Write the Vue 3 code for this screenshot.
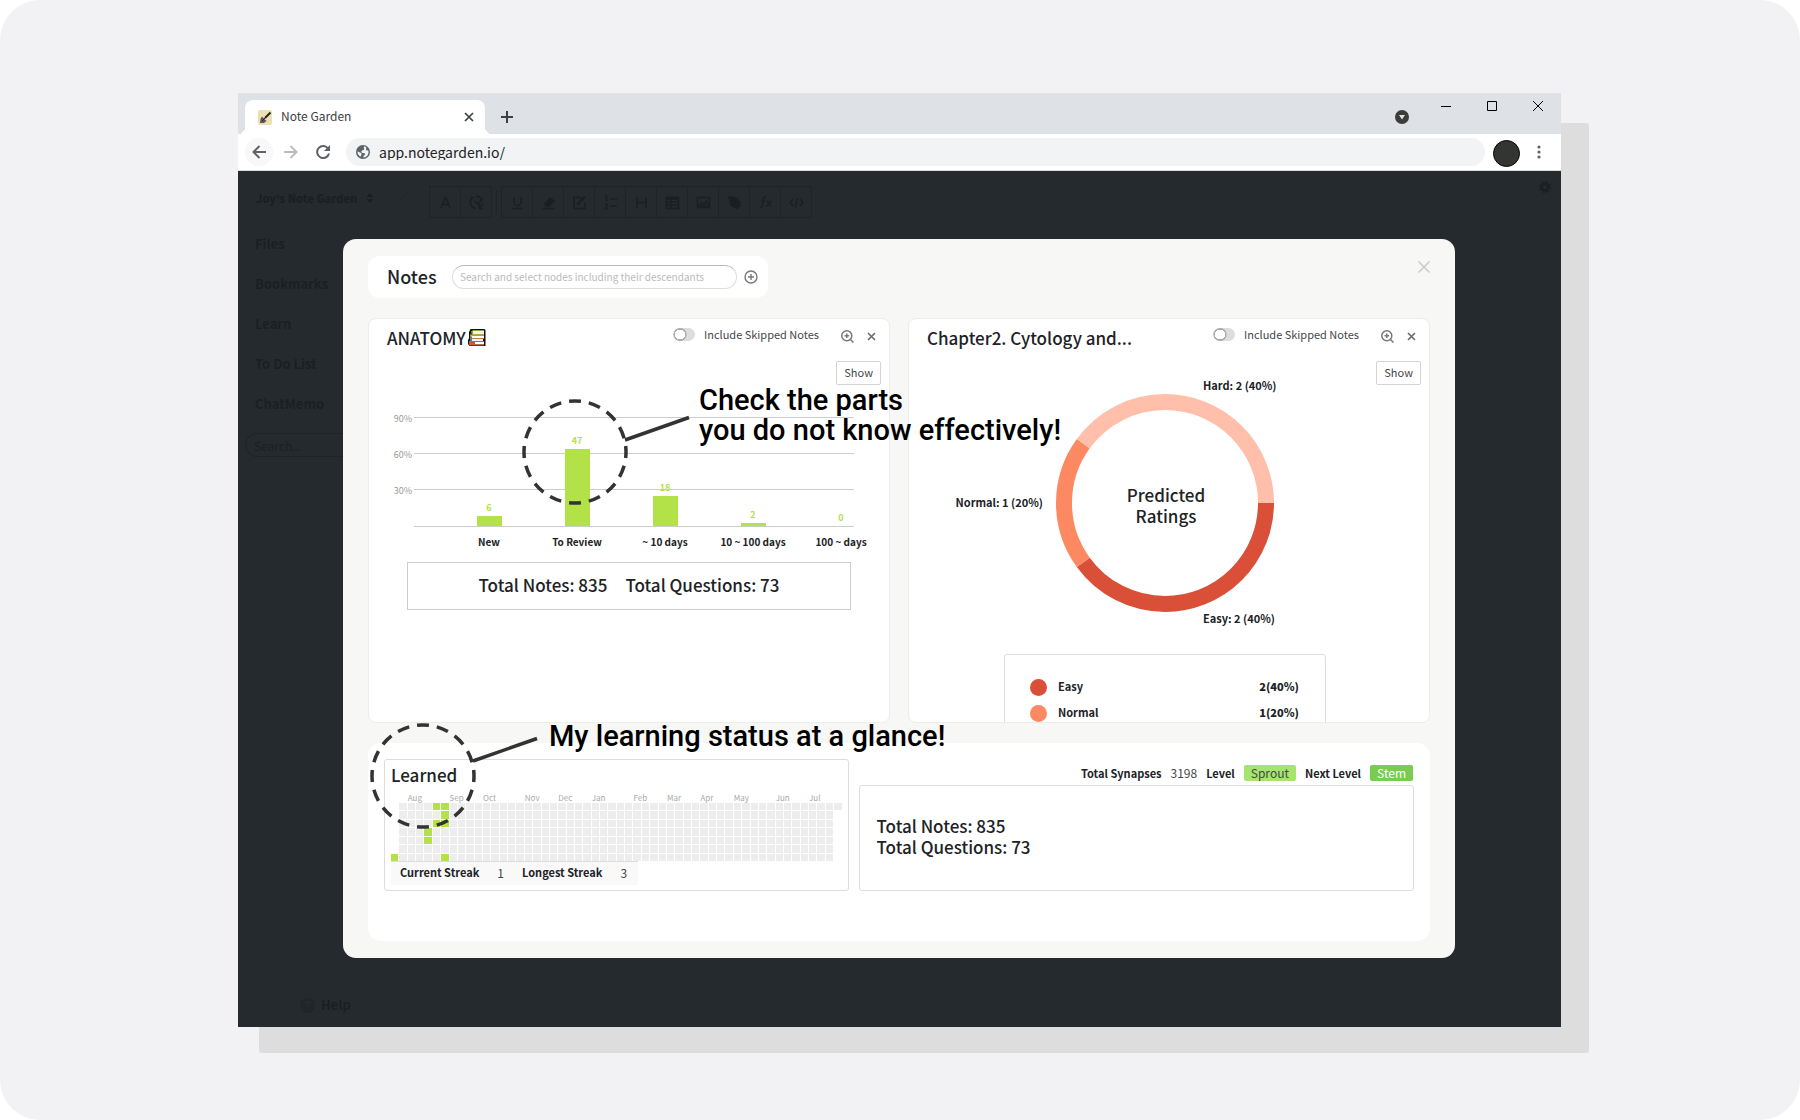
<script setup>
const nav = ['Files', 'Bookmarks', 'Learn', 'To Do List', 'ChatMemo']

const styleTools = [
  { name: 'Font', d: 'M3 13 7 2.500h1L12 13M4.500 9.500h6' },
  { name: 'Review', d: 'M5 2.500H2v3M2.500 3C.5 7 1 12 6.500 13.500M7 1.500c3-.5 5 .5 6 3M5.500 6l3 3L14 3.500M10 9v4.500h4M10.500 13 14 8' },
]
const editTools = [
  { name: 'Underline', d: 'M4 2v5a3.500 3.500 0 0 0 7 0V2M2.500 13.500h10' },
  { name: 'Highlight', d: 'M1.500 13.500h12M4 9l5-6 4 3-5 5H5z', fill: true },
  { name: 'Edit', d: 'M9 2.500H2v11h11V7M6 9.500l7.500-8M5.500 10l.5-2 6-6.500' },
  { name: 'Numbered list', d: 'M2 2l1.500-1v5M2 9.500c2-1.500 3 .5 2 1.500l-2 2.500h3M7 4h7M7 11h7' },
  { name: 'Heading', d: 'M3 2v11M12 2v11M3 7.500h9' },
  { name: 'Table', d: 'M1.500 2.500h12v11h-12zM1.500 4h12M1.500 7h12M1.500 10h12M6 4v9' },
  { name: 'Image', d: 'M1.500 2.500h12v10h-12zM3 11l3-3.500 2 2L10.500 6l2 5z' },
  { name: 'Pen', d: 'M2 2l7 1 4 5-4 5-5-3zM2 2l6 6M10 14l4-4', fill: true },
  { name: 'Formula', d: 'M8 2C5.500 1 5.500 4 5 7.500S4 13 1.500 12.500M3 6h4M8.500 6c2 0 2 5 5 5M13.500 6c-2 0-3 5-5.500 5' },
  { name: 'Code', d: 'M4 4 1 7.500 4 11M11 4l3 3.500L11 11M8.500 3l-2 9' },
]

const ticks = ['90%', '60%', '30%']
const bars = [
  { label: 'New', value: 6, height: 10 },
  { label: 'To Review', value: 47, height: 77 },
  { label: '~ 10 days', value: 18, height: 30 },
  { label: '10 ~ 100 days', value: 2, height: 3 },
  { label: '100 ~ days', value: 0, height: 0 },
]

const ratings = [
  { name: 'Easy', value: '2(40%)', color: '#d94f38' },
  { name: 'Normal', value: '1(20%)', color: '#fc8961' },
]

const months = [
  ['Aug', 3], ['Sep', 8], ['Oct', 12], ['Nov', 17], ['Dec', 21], ['Jan', 25],
  ['Feb', 30], ['Mar', 34], ['Apr', 38], ['May', 42], ['Jun', 47], ['Jul', 51],
]
const studied = new Set(['0-6', '4-3', '4-4', '5-0', '5-2', '6-0', '6-1', '6-2', '6-6'])
const days = []
for (let week = 0; week < 54; week++) {
  for (let day = 0; day < 7; day++) {
    if (week === 0 && day < 6) continue
    if (week === 53 && day > 0) continue
    days.push({ week: week + 1, day: day + 1, on: studied.has(`${week}-${day}`) })
  }
}
</script>

<template>
  <main class="stage">
    <div class="window">
      <header class="tabs">
        <div class="tab">
          <svg width="14" height="15" viewBox="0 0 14 15">
            <rect width="14" height="15" rx="2" fill="#ecdfb0" />
            <path d="M12.500 2.500 7 8" stroke="#222" stroke-width="2" />
            <path d="M4 6.500 8.500 11 6 13H2l.5-4z" fill="#5a5561" />
            <path d="M4 11l3-3" stroke="#222" stroke-width="1" />
          </svg>
          <span class="tab-title">Note Garden</span>
          <button class="plain" aria-label="Close tab">
            <svg width="10" height="10" viewBox="0 0 10 10" stroke="#3c4043" stroke-width="1.700"><path d="M1 1l8 8M9 1 1 9" /></svg>
          </button>
        </div>
        <button class="plain new-tab" aria-label="New tab">
          <svg width="12" height="12" viewBox="0 0 12 12" stroke="#3c4043" stroke-width="2"><path d="M6 0v12M0 6h12" /></svg>
        </button>
        <button class="plain tab-search" aria-label="Search tabs">
          <svg width="14" height="14" viewBox="0 0 14 14"><circle cx="7" cy="7" r="7" fill="#3c3c3c" /><path d="M4 5h6L7 9.500z" fill="#dee1e6" /></svg>
        </button>
        <div class="win-controls">
          <button class="plain" aria-label="Minimize"><svg width="10" height="10" viewBox="0 0 10 10" stroke="#000"><path d="M0 5.500h10" /></svg></button>
          <button class="plain" aria-label="Maximize"><svg width="10" height="10" viewBox="0 0 10 10" stroke="#000" fill="none"><path d="M.5.5h9v9h-9z" /></svg></button>
          <button class="plain" aria-label="Close"><svg width="10" height="10" viewBox="0 0 10 10" stroke="#000"><path d="M0 0l10 10M10 0 0 10" /></svg></button>
        </div>
      </header>

      <div class="address-bar">
        <button class="plain round back" aria-label="Back">
          <svg width="14" height="14" viewBox="0 0 14 14" fill="none" stroke="#5f6368" stroke-width="2"><path d="M14 7H1.500M7.500 1l-6 6 6 6" /></svg>
        </button>
        <button class="plain round" aria-label="Forward">
          <svg width="14" height="14" viewBox="0 0 14 14" fill="none" stroke="#babcbe" stroke-width="2"><path d="M0 7h12.500M6.500 1l6 6-6 6" /></svg>
        </button>
        <button class="plain round" aria-label="Reload">
          <svg width="14" height="14" viewBox="0 0 14 14" fill="none" stroke="#5f6368" stroke-width="2"><path d="M12 3.500A6 6 0 1 0 13 8.500" /><path d="M14 0v6H8z" fill="#5f6368" stroke="none" /></svg>
        </button>
        <label class="omnibox">
          <svg width="14" height="14" viewBox="0 0 14 14"><circle cx="7" cy="7" r="7" fill="#5f6368" /><path d="M8 1.500C7 3 9 3 8 4.500S5 5 5.500 7 9 7 9 9s-2 1-1.500 3.500c3-.2 5-2.500 5-5.500 0-.8-.2-1.500-.5-2-1 1-2 .500-2-1 0-.8.5-1 .5-1.200C9.700 1.900 9 1.600 8 1.500zM1.500 6.500c1.500.2 2 1 3.500 1.500 1 .5.500 2-.5 3.500C2.500 10.500 1.500 9 1.500 6.500z" fill="#f1f3f4" /></svg>
          <input type="text" value="app.notegarden.io/" aria-label="Address" />
        </label>
        <span class="avatar"></span>
        <button class="plain" aria-label="Menu">
          <svg width="14" height="14" viewBox="0 0 14 14" fill="#5f6368"><circle cx="7" cy="2" r="1.600" /><circle cx="7" cy="7" r="1.600" /><circle cx="7" cy="12" r="1.600" /></svg>
        </button>
      </div>

      <div class="app">
        <div class="workspace">
          <div class="top-row">
            <div class="garden">
              <strong>Joy's Note Garden</strong>
              <svg width="8" height="10" viewBox="0 0 8 10" fill="currentColor"><path d="M4 0l3.500 4h-7zM4 10 .5 6h7z" /></svg>
            </div>
            <svg class="collapse" width="8" height="14" viewBox="0 0 8 14" fill="none" stroke="currentColor"><path d="M7 1 1 7l6 6" /></svg>
            <div class="tools">
              <button v-for="t in styleTools" :key="t.name" :aria-label="t.name">
                <svg width="15" height="15" viewBox="0 0 15 15" fill="none" stroke="currentColor" stroke-width="1.500"><path :d="t.d" /></svg>
              </button>
            </div>
            <span class="divider"></span>
            <div class="tools">
              <button v-for="t in editTools" :key="t.name" :aria-label="t.name">
                <svg width="15" height="15" viewBox="0 0 15 15" :fill="t.fill ? 'currentColor' : 'none'" stroke="currentColor" stroke-width="1.500"><path :d="t.d" /></svg>
              </button>
            </div>
            <button class="plain gear" aria-label="Settings">
              <svg width="12" height="12" viewBox="0 0 12 12" fill="none" stroke="currentColor"><circle cx="6" cy="6" r="3.200" stroke-width="2.500" /><circle cx="6" cy="6" r="5.200" stroke-width="1.600" stroke-dasharray="2.040 2.040" /></svg>
            </button>
          </div>
          <nav class="side">
            <a v-for="n in nav" :key="n" href="#">{{ n }}</a>
            <input type="search" placeholder="Search..." aria-label="Search" />
          </nav>
          <a class="help" href="#">
            <svg width="15" height="15" viewBox="0 0 15 15"><circle cx="7.500" cy="7.500" r="7.500" fill="#202528" /><path d="M5.500 6c0-3 4-3 4-.5 0 1.500-2 1.500-2 3.500M7.500 10.500V12" fill="none" stroke="#272c30" stroke-width="1.500" /></svg>
            Help
          </a>
        </div>

        <section class="modal">
          <div class="modal-top">
            <div class="notes">
              <label for="node-search">Notes</label>
              <input id="node-search" type="text" placeholder="Search and select nodes including their descendants" />
              <button class="plain" aria-label="Add">
                <svg width="14" height="14" viewBox="0 0 14 14" fill="none" stroke="#77777b" stroke-width="1.400"><circle cx="7" cy="7" r="6" /><path d="M7 4v6M4 7h6" /></svg>
              </button>
            </div>
            <button class="plain modal-close" aria-label="Close">
              <svg width="12" height="12" viewBox="0 0 12 12" stroke="#ccc" stroke-width="1.700" stroke-linecap="round"><path d="M1 1l10 10M11 1 1 11" /></svg>
            </button>
          </div>

          <div class="cards">
            <article class="card">
              <header class="card-head">
                <h2>
                  ANATOMY
                  <svg width="18" height="18" viewBox="0 0 18 18">
                    <path d="M2.500 0H16a1.500 1.500 0 0 1 1.500 1.500V17H1.500L0 15v-4l1-1.500V3z" fill="#111" />
                    <path d="M4 2h12v3H4z" fill="#f4f1e4" /><path d="M3 2.500 5 1h11v1H5v3h11v1H4z" fill="#7da853" />
                    <path d="M3 6.500h13v2.500H3z" fill="#fff" /><path d="M2 5.500h14v1H4V9h12v.8H2.500z" fill="#e0a647" />
                    <path d="M3 10h12v2H3z" fill="#eef3fa" /><path d="M2 8h2v4H2z" fill="#3f80c8" />
                    <path d="M6 13h10v2.500H6z" fill="#fff" /><path d="M1 12h15v1H7v2.500h9v1H2l-1-1z" fill="#d9562c" />
                  </svg>
                </h2>
                <label class="switch"><input type="checkbox" /><span>Include Skipped Notes</span></label>
                <button class="plain zoom" aria-label="Zoom in">
                  <svg width="13" height="13" viewBox="0 0 13 13" fill="none" stroke="#77777b" stroke-width="1.500"><circle cx="5.800" cy="5.800" r="5" /><path d="M9.500 9.500l3 3M5.800 3.500v4.600M3.500 5.800h4.600" /></svg>
                </button>
                <button class="plain remove" aria-label="Remove">
                  <svg width="9" height="9" viewBox="0 0 9 9" stroke="#6a6a6e" stroke-width="1.600"><path d="M1 1l7 7M8 1 1 8" /></svg>
                </button>
              </header>
              <div class="card-body">
                <button class="show">Show</button>
                <div class="chart">
                  <div class="axis"><span v-for="t in ticks" :key="t">{{ t }}</span></div>
                  <div class="chart-main">
                    <div class="plot">
                      <div v-for="b in bars" :key="b.label" class="bar-col">
                        <span>{{ b.value }}</span>
                        <div class="bar" :style="{ height: b.height + 'px' }"></div>
                      </div>
                    </div>
                    <div class="cats"><span v-for="b in bars" :key="b.label">{{ b.label }}</span></div>
                  </div>
                </div>
                <div class="totals"><span>Total Notes: 835</span><span>Total Questions: 73</span></div>
              </div>
              <div class="callout callout-chart">
                <svg width="170" height="107" viewBox="0 0 170 107" fill="none" stroke="#333" stroke-width="3.500">
                  <circle cx="53" cy="53" r="51" pathLength="320" stroke-dasharray="12 8" stroke-dashoffset="6" />
                  <path d="M103 41 167 18.500" />
                </svg>
                <p>Check the parts<br />you do not know effectively!</p>
              </div>
            </article>

            <article class="card clipped">
              <header class="card-head">
                <h2>Chapter2. Cytology and...</h2>
                <label class="switch"><input type="checkbox" /><span>Include Skipped Notes</span></label>
                <button class="plain zoom" aria-label="Zoom in">
                  <svg width="13" height="13" viewBox="0 0 13 13" fill="none" stroke="#77777b" stroke-width="1.500"><circle cx="5.800" cy="5.800" r="5" /><path d="M9.500 9.500l3 3M5.800 3.500v4.600M3.500 5.800h4.600" /></svg>
                </button>
                <button class="plain remove" aria-label="Remove">
                  <svg width="9" height="9" viewBox="0 0 9 9" stroke="#6a6a6e" stroke-width="1.600"><path d="M1 1l7 7M8 1 1 8" /></svg>
                </button>
              </header>
              <div class="card-body">
                <button class="show">Show</button>
                <svg class="donut" width="420" height="242" viewBox="0 0 420 242">
                  <g fill="none" stroke-width="16">
                    <circle cx="210" cy="118" r="101" pathLength="100" stroke="#d94f38" stroke-dasharray="40 60" />
                    <circle cx="210" cy="118" r="101" pathLength="100" stroke="#fc8961" stroke-dasharray="20 80" stroke-dashoffset="-40" />
                    <circle cx="210" cy="118" r="101" pathLength="100" stroke="#ffbfab" stroke-dasharray="40 60" stroke-dashoffset="-60" />
                  </g>
                  <text x="248" y="5">Hard: 2 (40%)</text>
                  <text x="88" y="122" text-anchor="end">Normal: 1 (20%)</text>
                  <text x="248" y="238">Easy: 2 (40%)</text>
                  <text class="big" x="211" y="117" text-anchor="middle">Predicted</text>
                  <text class="big" x="211" y="138" text-anchor="middle">Ratings</text>
                </svg>
                <ul class="legend">
                  <li v-for="r in ratings" :key="r.name">
                    <i :style="{ background: r.color }"></i><span>{{ r.name }}</span><b>{{ r.value }}</b>
                  </li>
                </ul>
              </div>
            </article>
          </div>

          <div class="status">
            <article class="learned">
              <h2>Learned</h2>
              <div class="weeks months">
                <span v-for="[m, c] in months" :key="m" :style="{ gridColumn: c }">{{ m }}</span>
              </div>
              <div class="weeks heat">
                <i v-for="d in days" :key="d.week + '-' + d.day" :class="{ on: d.on }" :style="{ gridColumn: d.week, gridRow: d.day }"></i>
              </div>
              <dl class="streaks">
                <dt>Current Streak</dt><dd>1</dd>
                <dt>Longest Streak</dt><dd>3</dd>
              </dl>
              <div class="callout callout-learned">
                <svg width="170" height="107" viewBox="0 0 170 107" fill="none" stroke="#333" stroke-width="3.500">
                  <circle cx="53" cy="53" r="51" pathLength="320" stroke-dasharray="12 8" stroke-dashoffset="6" />
                  <path d="M103 38 167 15.500" />
                </svg>
                <p>My learning status at a glance!</p>
              </div>
            </article>
            <div class="summary">
              <div class="levels">
                <strong>Total Synapses</strong><span>3198</span>
                <strong>Level</strong><span class="tag">Sprout</span>
                <strong>Next Level</strong><span class="tag next">Stem</span>
              </div>
              <div class="summary-box">
                <p>Total Notes: 835</p>
                <p>Total Questions: 73</p>
              </div>
            </div>
          </div>
        </section>
      </div>
    </div>
  </main>
</template>

<style>
body { background: #fff; }
</style>

<style scoped>
* { box-sizing: border-box; margin: 0; }
svg { display: block; flex: none; }
button, input { font: inherit; }
a { color: inherit; text-decoration: none; }

.stage {
  min-height: 100vh;
  padding: 93px 239px 93px 238px;
  border-radius: 40px;
  background: #f2f2f4;
  color: #202226;
  font: 11px/16px "Noto Sans CJK KR", "Noto Sans", sans-serif;
}
.plain { display: flex; align-items: center; justify-content: center; padding: 0; border: 0; background: none; }

.window { position: relative; isolation: isolate; }
.window::before {
  content: "";
  position: absolute;
  z-index: -1;
  inset: 30px -28px -26px 21px;
  border-radius: 3px;
  background: #ddd;
}

.tabs { display: flex; height: 41px; padding: 7px 18px 0 7px; background: #dee1e6; }
.tab {
  position: relative;
  display: flex;
  align-items: center;
  width: 240px;
  padding: 0 11px 0 13px;
  border-radius: 8px 8px 0 0;
  background: #fff;
}
.tab::before, .tab::after { content: ""; position: absolute; bottom: 0; width: 7px; height: 7px; }
.tab::before { left: -7px; background: radial-gradient(circle at 0 0, transparent 7px, #fff 7px); }
.tab::after { right: -7px; background: radial-gradient(circle at 100% 0, transparent 7px, #fff 7px); }
.tab-title { flex: 1; margin-left: 9px; padding-bottom: 2px; font-size: 12px; color: #3c4043; }
.new-tab { margin-left: 16px; }
.tab-search { margin-left: auto; }
.win-controls { display: flex; align-items: flex-start; gap: 36px; margin: 1px 0 0 32px; }

.address-bar { display: flex; align-items: center; height: 37px; padding: 0 15px 0 7px; border-bottom: 1px solid #dadce0; background: #fff; }
.round { width: 28px; height: 28px; margin-right: 4px; border-radius: 14px; }
.back { background: #f8f8f9; }
.omnibox { display: flex; flex: 1; align-items: center; height: 28px; margin: 0 8px 0 5px; padding: 0 10px; border-radius: 14px; background: #f1f3f4; }
.omnibox input { flex: 1; margin-left: 9px; padding: 0; border: 0; background: none; color: #202124; font-size: 14px; outline: 0; }
.avatar { width: 27px; height: 27px; margin: 2px 12px 0 0; border: 1px solid #000; border-radius: 14px; background: #333532; }

.app { display: grid; background: #252a2e; color: #1b1f22; }
.app > * { grid-area: 1 / 1; min-width: 0; }
.workspace { display: flex; flex-direction: column; font-size: 13px; font-weight: 700; }
.top-row { display: flex; height: 53px; padding: 15px 10px 6px 18px; }
.garden { display: flex; align-items: center; gap: 9px; width: 142px; height: 24px; font-size: 11px; }
.collapse { margin: 8px 23px 0 0; color: #202528; }
.tools { display: flex; height: 32px; border: 1px solid #1e2326; border-width: 1px 0 1px 1px; color: #1b1f22; }
.tools button { display: flex; align-items: center; justify-content: center; width: 31px; padding: 0; border: 0; border-right: 1px solid #1e2326; background: none; color: inherit; }
.divider { width: 1px; height: 24px; margin: 4px; background: #1e2326; }
.gear { align-self: flex-start; margin: -5px 0 0 auto; color: #1b1f22; }
.side { display: flex; flex-direction: column; padding-left: 7px; }
.side a { padding-left: 10px; line-height: 40px; }
.side input { width: 180px; height: 24px; margin-top: 9px; padding: 0 8px; border: 1px solid #1e2326; border-radius: 12px; background: none; font-size: 12px; font-weight: 400; }
.side input::placeholder { color: #1b1f22; }
.help { display: flex; align-items: center; gap: 6px; margin-top: auto; padding: 0 0 12px 62px; line-height: 20px; }

.modal { margin: 68px 106px 69px 105px; padding: 17px 25px; border-radius: 13px; background: #f7f7f5; color: #202226; }
.modal-top { display: flex; justify-content: space-between; align-items: flex-start; }
.notes { display: flex; align-items: center; width: 400px; height: 42px; padding: 0 10px 0 19px; border-radius: 12px; background: #fff; }
.notes label { flex: 1; padding-bottom: 2px; font-size: 18px; line-height: 22px; font-weight: 500; }
.notes input { width: 285px; height: 24px; margin-right: 7px; padding: 0 7px 2px; border: 1px solid #ddd; border-top-color: #b8b8b8; border-radius: 12px; font-size: 10px; }
.notes input::placeholder { color: #bbb; }
.modal-close { margin-top: 5px; }

h2 { display: flex; align-items: center; gap: 2px; padding-bottom: 2px; font-size: 17px; line-height: 22px; font-weight: 500; }
.cards { display: grid; grid-template-columns: 1fr 1fr; gap: 18px; height: 405px; margin-top: 20px; }
.card { position: relative; min-width: 0; border: 1px solid #ececec; border-radius: 8px; background: #fff; }
.clipped { overflow: hidden; }
.card-head { display: flex; align-items: flex-start; padding: 8px 13px 0 18px; }
.card-head h2 { flex: 1; }
.switch { display: flex; align-items: center; gap: 9px; margin-top: -1px; color: #44464b; }
.switch input { appearance: none; width: 22px; height: 13px; border-radius: 7px; background: radial-gradient(circle at 7px 50%, #fff 5px, #aaa 5px, #aaa 6px, transparent 7px) #ddd; }
.zoom { margin: 3px 13px 0 22px; }
.remove { margin-top: 5px; }
.card-body { padding: 0 8px 0 0; }
.show { display: block; height: 24px; margin: 10px 0 0 auto; padding: 0 7px 2px; border: 1px solid #d4d4d4; border-radius: 2px; background: #fff; color: #44464b; }

.chart { display: flex; margin: 32px -4px 0 0; }
.axis { display: flex; flex-direction: column; width: 45px; margin-top: -16px; padding-right: 2px; text-align: right; font-size: 9px; line-height: 36px; color: #999; }
.chart-main { flex: 1; min-width: 0; }
.plot {
  height: 110px;
  padding-bottom: 1px;
  background:
    linear-gradient(#ccc, #ccc) 0 100% / calc(100% - 31px) 1px no-repeat,
    repeating-linear-gradient(to bottom, #ccc 0 1px, transparent 1px 36px) 0 0 / calc(100% - 31px) 108px no-repeat;
}
.plot, .cats { display: grid; grid-template-columns: repeat(5, minmax(0, 1fr)); padding-left: 31px; }
.bar-col { display: flex; flex-direction: column; align-items: center; justify-content: flex-end; color: #b2e248; font-size: 9px; font-weight: 700; }
.bar { width: 25px; background: #b2e248; }
.cats { margin-top: 7px; text-align: center; font-size: 10px; font-weight: 700; white-space: nowrap; }
.totals { display: flex; align-items: center; justify-content: center; gap: 18px; height: 48px; margin: 12px 30px 0 38px; padding-bottom: 3px; border: 1px solid #ccc; font-size: 17px; font-weight: 500; }

.donut { margin: 0 auto; overflow: visible; font-weight: 700; fill: #202226; }
.donut .big { font-size: 17px; font-weight: 500; }
.legend { width: 322px; min-height: 118px; margin: 27px auto 0; padding: 18px 26px; border: 1px solid #ddd; border-radius: 3px; list-style: none; font-weight: 700; }
.legend li { display: flex; align-items: center; height: 26px; }
.legend i { width: 17px; height: 17px; margin: 3px 11px 0 -1px; border-radius: 50%; }
.legend b { margin-left: auto; }

.status { display: grid; grid-template-columns: 465fr 556fr; gap: 10px; margin-top: 20px; padding: 16px 16px 50px; border-radius: 13px; background: #fff; }
.status > * { min-width: 0; }
.learned { position: relative; padding: 4px 6px 5px; border: 1px solid #ddd; border-radius: 3px; }
.weeks { display: grid; grid-template-columns: repeat(54, minmax(0, 1fr)); column-gap: 1px; }
.months { margin-top: 4px; font-size: 8px; line-height: 11px; color: #aaa; white-space: nowrap; }
.heat { grid-template-rows: repeat(7, 1fr); row-gap: 1px; height: 58px; }
.heat i { background: #ededed; }
.heat .on { background: #b2e248; }
.streaks { display: flex; width: 247px; height: 24px; padding-left: 9px; border-top: 1px solid #ddd; background: #f9f9f9; line-height: 21px; white-space: nowrap; }
.streaks dt { font-weight: 700; }
.streaks dd { margin: 0 18px; font-size: 12px; color: #44464b; }

.levels { display: flex; justify-content: flex-end; align-items: center; gap: 9px; padding: 6px 1px 4px; }
.levels strong { font-weight: 700; }
.levels span { font-size: 12px; color: #44464b; }
.levels .tag { padding: 0 7px; border-radius: 2px; background: #a5e46d; }
.levels .next { background: #78cc50; color: #fff; }
.summary-box { display: flex; flex-direction: column; justify-content: center; height: 106px; padding: 0 0 5px 17px; border: 1px solid #ddd; border-radius: 3px; font-size: 17px; line-height: 21px; font-weight: 500; }

.callout { position: absolute; z-index: 2; display: flex; color: #000; font: 500 29px/30px Roboto, sans-serif; white-space: nowrap; pointer-events: none; }
.callout-chart { left: 153px; top: 80px; }
.callout-chart p { margin: -14px 0 0 7px; }
.callout-learned { left: -15px; top: -37px; }
.callout-learned p { margin: -2px 0 0 9px; }
</style>
